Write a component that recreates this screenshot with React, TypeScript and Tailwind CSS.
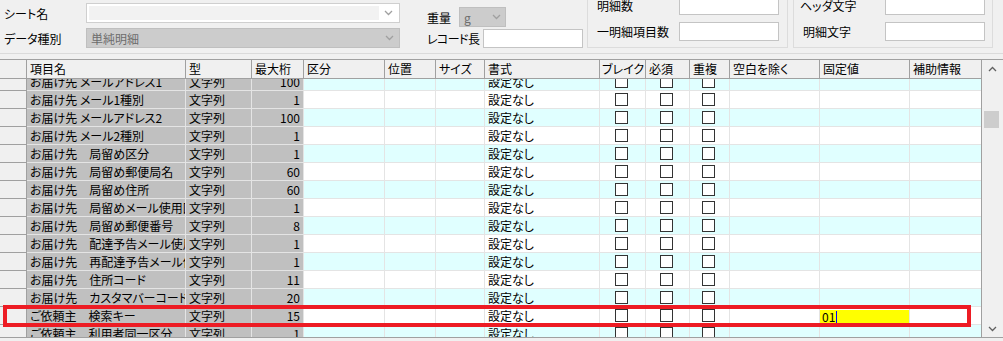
import React from "react";

interface Row {
  name: string;
  len: string;
  fixed?: string;
}

const rows: Row[] = [
  { name: "お届け先 メールアドレス1", len: "100" },
  { name: "お届け先 メール1種別", len: "1" },
  { name: "お届け先 メールアドレス2", len: "100" },
  { name: "お届け先 メール2種別", len: "1" },
  { name: "お届け先　局留め区分", len: "1" },
  { name: "お届け先　局留め郵便局名", len: "60" },
  { name: "お届け先　局留め住所", len: "60" },
  { name: "お届け先　局留めメール使用区分", len: "1" },
  { name: "お届け先　局留め郵便番号", len: "8" },
  { name: "お届け先　配達予告メール使用区分", len: "1" },
  { name: "お届け先　再配達予告メール使用区分", len: "1" },
  { name: "お届け先　住所コード", len: "11" },
  { name: "お届け先　カスタマバーコード", len: "20" },
  { name: "ご依頼主　検索キー", len: "15", fixed: "01" },
  { name: "ご依頼主　利用者同一区分", len: "1" },
];

const Chevron = ({ up = false, color = "#a0a0a0" }: { up?: boolean; color?: string }) => (
  <svg width="9" height="6" viewBox="0 0 9 6">
    <path
      d={up ? "M1 5 L4.5 1.5 L8 5" : "M1 1 L4.5 4.5 L8 1"}
      fill="none"
      stroke={color}
      strokeWidth="1.3"
    />
  </svg>
);

const Check = () => (
  <div className="w-[13px] h-[13px] border border-[#333333] bg-white" />
);

const TextBox = ({ w }: { w: string }) => (
  <div className={`${w} h-[19px] bg-white border border-[#c4c4c4]`} />
);

const App: React.FC = () => {
  return (
    <div className="relative w-[1003px] h-[341px] overflow-hidden bg-[#f0f0f0] text-[12px] leading-[17px] text-black font-['Noto_Sans_CJK_JP',sans-serif] [font-feature-settings:'palt']">
      {/* top settings */}
      <div className="h-[54px] flex border-b border-[#dadada]">
        <div className="ml-[4px] w-[396px] flex flex-col">
          <div className="mt-[3px] h-[20px] flex items-center">
            <span className="w-[82px]">シート名</span>
            <div className="w-[314px] h-[20px] flex border border-[#cfcfcf] bg-white p-[2px]">
              <div className="flex-1 bg-[#f2f2f2]" />
              <div className="w-[18px] flex items-center justify-center">
                <Chevron />
              </div>
            </div>
          </div>
          <div className="mt-[5px] h-[20px] flex items-center">
            <span className="w-[82px]">データ種別</span>
            <div className="w-[314px] h-[20px] flex items-center border border-[#bfbfbf] bg-[#cccccc] pl-[4px] text-[#6d6d6d]">
              <span className="flex-1">単純明細</span>
              <div className="w-[20px] flex items-center justify-center">
                <Chevron />
              </div>
            </div>
          </div>
        </div>

        <div className="ml-[27px] flex flex-col pt-[7px]">
          <div className="h-[20px] flex items-center">
            <span className="w-[32px]">重量</span>
            <div className="w-[47px] h-[20px] flex items-center border border-[#bfbfbf] bg-[#cccccc] pl-[4px] text-[#6d6d6d]">
              <span className="flex-1">g</span>
              <div className="w-[18px] flex items-center justify-center">
                <Chevron />
              </div>
            </div>
          </div>
          <div className="mt-[2px] h-[19px] flex items-center">
            <span className="w-[56px] tracking-[-0.6px]">レコード長</span>
            <TextBox w="w-[100px]" />
          </div>
        </div>

        <div className="ml-[4px] w-[201px] h-[62px] -mt-[14px] border border-[#dcdcdc] pt-[9px] pl-[9px]">
          <div className="h-[19px] flex items-center">
            <span className="w-[82px]">明細数</span>
            <TextBox w="w-[100px]" />
          </div>
          <div className="mt-[7px] h-[19px] flex items-center">
            <span className="w-[82px]">一明細項目数</span>
            <TextBox w="w-[100px]" />
          </div>
        </div>

        <div className="ml-[5px] w-[200px] h-[62px] -mt-[14px] border border-[#dcdcdc] pt-[9px] pl-[6px]">
          <div className="h-[19px] flex items-center">
            <span className="w-[85px]">ヘッダ文字</span>
            <TextBox w="w-[100px]" />
          </div>
          <div className="mt-[7px] h-[19px] flex items-center">
            <span className="w-[85px] pl-[3px]">明細文字</span>
            <TextBox w="w-[100px]" />
          </div>
        </div>
      </div>

      {/* grid */}
      <div className="mt-[5px] flex border-t border-b border-[#a0a0a0]">
        <div className="w-[981px]">
          <div className="h-[19px] flex bg-[#f0f0f0] border-b border-[#a0a0a0] whitespace-nowrap">
            <div className="w-[27px] border-r border-[#a0a0a0]" />
            <div className="w-[159px] pl-[3px] border-r border-[#a0a0a0]">項目名</div>
            <div className="w-[66px] pl-[3px] border-r border-[#a0a0a0]">型</div>
            <div className="w-[52px] pl-[3px] border-r border-[#a0a0a0]">最大桁</div>
            <div className="w-[81px] pl-[3px] border-r border-[#a0a0a0]">区分</div>
            <div className="w-[51px] pl-[3px] border-r border-[#a0a0a0]">位置</div>
            <div className="w-[49px] pl-[3px] border-r border-[#a0a0a0]">サイズ</div>
            <div className="w-[115px] pl-[3px] border-r border-[#a0a0a0]">書式</div>
            <div className="w-[46px] pl-[2px] border-r border-[#a0a0a0] overflow-hidden">ブレイク</div>
            <div className="w-[44px] pl-[3px] border-r border-[#a0a0a0]">必須</div>
            <div className="w-[40px] pl-[3px] border-r border-[#a0a0a0]">重複</div>
            <div className="w-[90px] pl-[3px] border-r border-[#a0a0a0]">空白を除く</div>
            <div className="w-[90px] pl-[3px] border-r border-[#a0a0a0]">固定値</div>
            <div className="w-[71px] pl-[3px]">補助情報</div>
          </div>

          <div className="h-[258px] overflow-hidden">
            <div className="-mt-[6px]">
              {rows.map((r, i) => {
                const bg = i % 2 === 0 ? "bg-[#e0ffff]" : "bg-white";
                return (
                  <div key={i} className="h-[18px] flex whitespace-nowrap">
                    <div className="w-[27px] bg-[#f0f0f0] border-r border-b border-[#a0a0a0]" />
                    <div className="w-[159px] pl-[3px] bg-[#c0c0c0] border-r border-b border-[#e4e4e4] overflow-hidden">
                      {r.name}
                    </div>
                    <div className="w-[66px] pl-[3px] bg-[#c0c0c0] border-r border-b border-[#e4e4e4]">文字列</div>
                    <div className="w-[52px] pr-[3px] text-right bg-[#c0c0c0] border-r border-b border-[#e4e4e4]">
                      {r.len}
                    </div>
                    <div className={`w-[81px] ${bg} border-r border-b border-[#e4e4e4]`} />
                    <div className={`w-[51px] ${bg} border-r border-b border-[#e4e4e4]`} />
                    <div className={`w-[49px] ${bg} border-r border-b border-[#e4e4e4]`} />
                    <div className={`w-[115px] pl-[3px] ${bg} border-r border-b border-[#e4e4e4]`}>設定なし</div>
                    <div className={`w-[46px] pl-[15px] pt-[2px] ${bg} border-r border-b border-[#e4e4e4]`}>
                      <Check />
                    </div>
                    <div className={`w-[44px] pl-[14px] pt-[2px] ${bg} border-r border-b border-[#e4e4e4]`}>
                      <Check />
                    </div>
                    <div className={`w-[40px] pl-[12px] pt-[2px] ${bg} border-r border-b border-[#e4e4e4]`}>
                      <Check />
                    </div>
                    <div className={`w-[90px] ${bg} border-r border-b border-[#e4e4e4]`} />
                    <div className={`w-[90px] ${bg} border-r border-b border-[#e4e4e4] pt-[3px]`}>
                      {r.fixed && (
                        <div className="w-[89px] h-[13px] bg-[#ffff00] flex items-center pl-[2px] leading-[13px]">
                          <span>{r.fixed}</span>
                          <span className="ml-[1px] w-[1px] h-[12px] bg-[#0000ff]" />
                        </div>
                      )}
                    </div>
                    <div className={`w-[71px] ${bg} border-b border-[#e4e4e4]`} />
                  </div>
                );
              })}
            </div>
          </div>
        </div>

        {/* vertical scrollbar */}
        <div className="w-[22px] h-[277px] border-l border-[#a0a0a0] bg-[#f0f0f0] flex flex-col">
          <div className="h-[17px] flex items-center justify-center">
            <Chevron up color="#606060" />
          </div>
          <div className="flex-1 pt-[34px] pl-[2px]">
            <div className="w-[15px] h-[17px] bg-[#cdcdcd]" />
          </div>
          <div className="h-[17px] flex items-center justify-center">
            <Chevron color="#606060" />
          </div>
        </div>
      </div>

      {/* selection highlight */}
      <div className="absolute left-[3px] top-[305px] w-[968px] h-[22px] border-4 border-[#ed1c24]" />
    </div>
  );
};

export default App;
